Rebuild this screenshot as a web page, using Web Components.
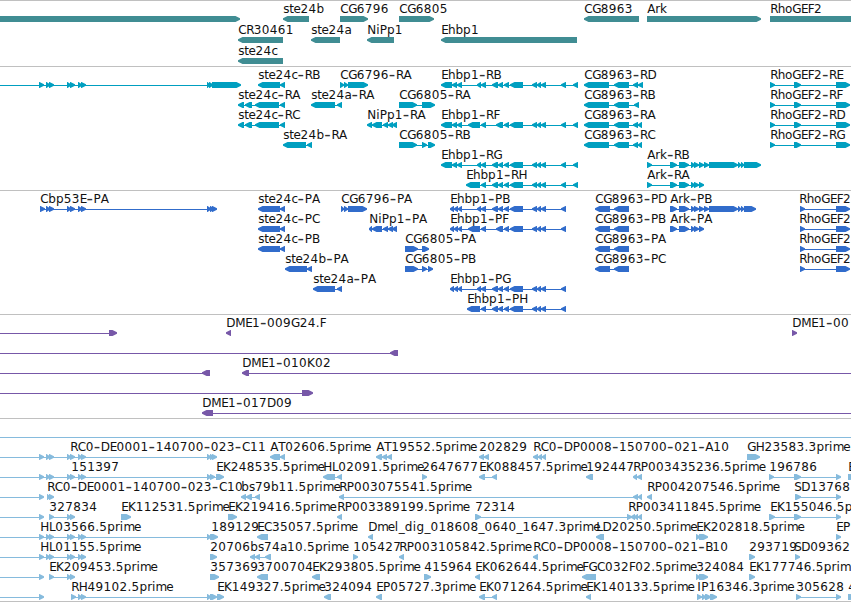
<!DOCTYPE html>
<html lang="en">
<head>
<meta charset="utf-8">
<title>Genome browser</title>
<style>
  body {
    margin: 0;
    background: #fff;
    overflow: hidden;
  }
</style>
</head>
<body>
<genome-view></genome-view>

<script>
// advance widths of the label characters, in px (digits are 8)
const ADVANCE = {
  A: 8, B: 7, C: 8, D: 9, E: 6.8, F: 6.2, G: 8.6, H: 8.7, I: 4, K: 7.8, L: 6.3, M: 10,
  N: 9, P: 7.2, R: 7.5, S: 7, T: 7,
  a: 7, b: 7.7, c: 6, d: 8, e: 7, g: 8, h: 7.4, i: 3.6, k: 7, l: 4, m: 10.6, o: 7.2,
  p: 7.8, r: 4.8, s: 6, t: 4.4, "-": 7.1, ".": 4, _: 6,
};

// Feature: "label|strand|spans". In spans, "~x" stretches the intron line to x
// and "@x" moves the label away from the first span.
const HEAD = "39-44 46-50 49-54 67-71 70-75 78-82 81-86";
const EHB_END = "504-509 510-523 532-537 537-541 541-546 561-566";
const EHB_RB = "441-452 452-457 457-462 477-481 481-486 492-498 498-503 " + EHB_END + " 573-578";
const EHB_RF = "441-452 452-457 457-462 468-480 481-486 496-503 " + EHB_END + " 573-578";
const EHB_H = "481-486 492-498 498-503 " + EHB_END;
const EHB_PB = "450-454 454-458 458-462 477-481 481-486 492-498 498-503 " + EHB_END;
const ARK = "670-677 679-689 691-695 694-699 699-704";
const ARK_LONG = "670-677 679-689 691-695 694-699 699-704 704-709 709-738 738-741 741-744";
const RHO_R = "770-775 794-801 836-850";
const RHO_P = "RhoGEF2|>|@799 800-805 836-850";
const STE_C = "238-244 245-252 255-279 280-285";

const TRACKS = [
  { color: "#408d93", row: 21, pad: 2, rows: [
    ["|>|-9-240", "ste24b|<|283-309", "CG6796|>|340-368", "CG6805|>|399-434",
     "CG8963|<|584-639", "Ark|>|647-761", "RhoGEF2|>|770-865"],
    ["CR30461|<|238-283", "ste24a|<|311-340", "NiPp1|<|367-394", "Ehbp1|<|441-577"],
    ["ste24c|<|238-283"],
  ] },
  { color: "#009fc0", row: 20, pad: 3, rows: [
    [`|>|~-5 ${HEAD} 207-210 209-213 212-241`, "ste24c-RB|<|258-280 280-285",
     "CG6796-RA|>|340-344 344-348 348-368", `Ehbp1-RB|<|${EHB_RB}`,
     "CG8963-RD|<|584-609 614-629 633-638 638-643", `RhoGEF2-RE|>|${RHO_R}`],
    [`ste24c-RA|<|${STE_C}`, "ste24a-RA|<|311-335 337-342", "CG6805-RA|>|399-417 422-435",
     "CG8963-RB|<|584-609 614-629 634-639", `RhoGEF2-RF|>|${RHO_R}`],
    [`ste24c-RC|<|${STE_C}`, "NiPp1-RA|<|367-372 372-382 383-388 388-393 392-397",
     `Ehbp1-RF|<|${EHB_RF}`, "CG8963-RA|<|584-609 614-629 633-638 638-642", `RhoGEF2-RD|>|${RHO_R}`],
    ["ste24b-RA|<|283-306 307-312", "CG6805-RB|>|399-417 422-427 428-435",
     "CG8963-RC|<|584-609 614-629 633-638 638-642", `RhoGEF2-RG|>|${RHO_R}`],
    [`Ehbp1-RG|<|${EHB_RB}`, `Ark-RB|>|647-652 ${ARK_LONG} 744-761`],
    [`Ehbp1-RH|<|466-480 ${EHB_H} 573-578`, `Ark-RA|>|647-652 ${ARK}`],
  ] },
  { color: "#316ccb", row: 20, pad: 3, rows: [
    ["Cbp53E-PA|>|40-45 46-50 49-54 67-71 70-75 78-82 81-86 207-211 210-214 212-217",
     "ste24c-PA|<|258-280 280-285", "CG6796-PA|>|341-344 344-348 348-367", `Ehbp1-PB|<|${EHB_PB}`,
     "CG8963-PD|<|595-610 614-629", `Ark-PB|>|${ARK_LONG} 744-756`, RHO_P],
    ["ste24c-PC|<|258-280 280-285", "NiPp1-PA|<|369-372 372-382 383-388 388-393 392-397",
     `Ehbp1-PF|<|450-454 454-458 458-462 468-480 481-486 496-503 ${EHB_END}`,
     "CG8963-PB|<|595-610 614-629", `Ark-PA|>|${ARK}`, RHO_P],
    ["ste24c-PB|<|258-280 280-285", "CG6805-PA|>|405-418 422-429", "CG8963-PA|<|595-610 614-629", RHO_P],
    ["ste24b-PA|<|285-307 307-312", "CG6805-PB|>|405-418 422-427 428-433",
     "CG8963-PC|<|595-610 614-629", RHO_P],
    ["ste24a-PA|<|313-335 337-342", `Ehbp1-PG|<|${EHB_PB}`],
    [`Ehbp1-PH|<|467-480 ${EHB_H}`],
  ] },
  { color: "#7758a8", row: 20, pad: 3, rows: [
    ["|>|~-5 109-117", "DME1-009G24.F|<|226-231", "DME1-00|>|792-797"],
    ["|<|~-5 390-398"],
    ["|<|~-5 202-210", "DME1-010K02|<|242-249 ~860"],
    ["|>|~-5 302-313"],
    ["DME1-017D09|<|202-213 ~860"],
  ] },
  { color: "#86bbdd", row: 20, pad: 2, rows: [
    ["|>|~-5 ~860"],
    [`RC0-DE0001-140700-023-C11|>|@70 ~-5 ${HEAD} 207-211 210-214 212-217`,
     "AT02606.5prime|<|270-280 280-285", "AT19552.5prime|<|376-382 382-387 387-392",
     "202829|<|479-484 484-489", "RC0-DP0008-150700-021-A10|<|533-538 538-542 542-546",
     "GH23583.3prime|>|747-760"],
    [`151397|>|@71 ~-5 ${HEAD} 207-211 210-215 ~224`, "EK248535.5prime|>|216-224",
     "HL02091.5prime|<|323-335 337-342", "2647677|>|422-427", "EK088457.5prime|<|479-485 492-497",
     "192447|<|586-593", "RP003435236.5prime|<|633-637 637-642", "196786|>|769-774 794-801 836-841",
     "E|>|848-855"],
    ["|>|~-5 39-44", "RC0-DE0001-140700-023-C10|>|47-50 49-54", "bs79b11.5prime|<|241-246 246-252 255-260",
     "RP003075541.5prime|<|339-344 633-638 638-642", "RP004207546.5prime|<|647-652",
     "SD13768|>|@794 795-801 836-841"],
    ["|>|~-5 39-44", "327834|>|49-54 67-71 70-75", "EK112531.5prime|>|121-131",
     "EK219416.5prime|>|228-237", "RP003389199.5prime|<|337-342", "72314|>|475-481 627-632",
     "RP003411845.5prime|<|@628 631-635 634-638 638-642", "EK155046.5p|>|@770 769-775 794-801 836-841"],
    [`HL03566.5prime|>|@40 ~-5 ${HEAD} 207-211 210-214`, "189129|>|211-218",
     "EC35057.5prime|<|257-268", "Dmel_dig_018608_0640_1647.3prime|<|368-373",
     "LD20250.5prime|<|596-604", "EK202818.5prime|>|696-700 699-708", "EP|>|836-841"],
    [`HL01155.5prime|>|@40 ~-5 ${HEAD}`, "20706|>|210-217", "bs74a10.5prime|<|250-255 255-260 265-271",
     "105427|>|353-358", "RP003105842.5prime|<|399-404", "RC0-DP0008-150700-021-B10|<|533-538",
     "293719|>|749-755", "SD09362|>|@794 795-800"],
    ["|>|~-5 39-44", "EK209453.5prime|>|49-54 67-71 70-75", "357369|>|210-219",
     "3700704|<|257-268", "EK293805.5prime|<|312-320", "415964|>|424-431",
     "EK062644.5prime|<|475-480", "FGC032F02.5prime|<|582-596", "324084|>|696-700 699-708",
     "EK177746.5prim|>|749-755"],
    ["|>|~-5 39-44", "RH49102.5prime|>|71-76 78-82 81-86 207-211 210-217", "EK149327.5prime|>|217-224",
     "324094|<|324-331", "EP05727.3prime|<|376-382", "EK071264.5prime|<|479-485 492-497",
     "EK140133.5prime|<|586-591", "IP16346.3prime|>|697-702 702-706 705-711 710-717",
     "305628|>|796-801 836-841", "4|>|848-855"],
  ] },
];

class SeqFeature extends HTMLElement {
  constructor() {
    super();
    this.attachShadow({ mode: "open" });
  }

  connectedCallback() {
    const [label, strand, spans] = this.getAttribute("spec").split("|");
    const boxes = [];
    const ends = [];
    let labelX = null;
    for (const token of spans.split(" ")) {
      if (token[0] === "~") {
        ends.push(Number(token.slice(1)));
      } else if (token[0] === "@") {
        labelX = Number(token.slice(1));
      } else {
        const [, a, b] = token.match(/^(-?\d+)-(\d+)$/).map(Number);
        boxes.push([a, b]);
        ends.push(a, b);
      }
    }
    if (labelX === null && boxes.length) labelX = boxes[0][0];
    const left = Math.min(...ends);
    const right = Math.max(...ends);

    this.shadowRoot.innerHTML = `
            <style>
                :host {
                    position: absolute;
                    inset: 0;
                }
                svg {
                    display: block;
                    width: 100%;
                    height: 100%;
                    overflow: visible;
                }
                text {
                    font: 12px "DejaVu Sans", sans-serif;
                    fill: #111;
                }
                .dash {
                    font-size: 18px;
                    fill: #333;
                }
            </style>
            <svg fill="currentColor">
                ${boxes.length === 1 && ends.length === 2 ? "" : `<rect x="${left + 1}" y="18" width="${right - left - 2}" height="1"/>`}
                ${boxes.map(([a, b]) => this.arrow(a, b, strand)).join("")}
                ${label ? this.text(label, labelX) : ""}
            </svg>
        `;
  }

  arrow(a, b, strand) {
    const head = Math.min(5, b - a);
    const points = strand === ">"
      ? `${a},15 ${b - head + 0.5},15 ${b},17.2 ${b},18.8 ${b - head + 0.5},21 ${a},21`
      : `${b},15 ${a + head - 0.5},15 ${a},17.2 ${a},18.8 ${a + head - 0.5},21 ${b},21`;
    return `<polygon points="${points}"/>`;
  }

  text(label, x) {
    let pen = x + 0.2;
    const xs = [];
    for (const c of label) {
      xs.push(pen.toFixed(1));
      pen += ADVANCE[c] || 8;
    }
    const body = label.replace(/-/g, '<tspan class="dash" dy="1">-</tspan><tspan dy="-1">')
      + "</tspan>".repeat(label.split("-").length - 1);
    return `<text y="12" x="${xs.join(" ")}">${body}</text>`;
  }
}

class TrackRow extends HTMLElement {
  constructor() {
    super();
    this.attachShadow({ mode: "open" });
    this.shadowRoot.innerHTML = `
            <style>
                :host {
                    display: block;
                    position: relative;
                    height: var(--row-height);
                }
            </style>
            <slot></slot>
        `;
  }
}

class FeatureTrack extends HTMLElement {
  constructor() {
    super();
    this.attachShadow({ mode: "open" });
    this.shadowRoot.innerHTML = `
            <style>
                :host {
                    display: flex;
                    flex-direction: column;
                    border-top: 1px solid #c0c0c0;
                }
            </style>
            <slot></slot>
        `;
  }
}

class GenomeView extends HTMLElement {
  constructor() {
    super();
    this.attachShadow({ mode: "open" });
  }

  connectedCallback() {
    this.shadowRoot.innerHTML = `
            <style>
                :host {
                    display: flex;
                    flex-direction: column;
                    box-sizing: border-box;
                    width: 851px;
                    height: 602px;
                    overflow: hidden;
                    border-bottom: 1px solid #c0c0c0;
                }
            </style>
            ${TRACKS.map((track) => `
                <feature-track style="color: ${track.color}; --row-height: ${track.row}px; padding-bottom: ${track.pad}px">
                    ${track.rows.map((row) => `<track-row>${row.map((spec) => `<seq-feature spec="${spec.replace("<", "&lt;")}"></seq-feature>`).join("")}</track-row>`).join("")}
                </feature-track>`).join("")}
        `;
  }
}

customElements.define("seq-feature", SeqFeature);
customElements.define("track-row", TrackRow);
customElements.define("feature-track", FeatureTrack);
customElements.define("genome-view", GenomeView);
</script>
</body>
</html>
